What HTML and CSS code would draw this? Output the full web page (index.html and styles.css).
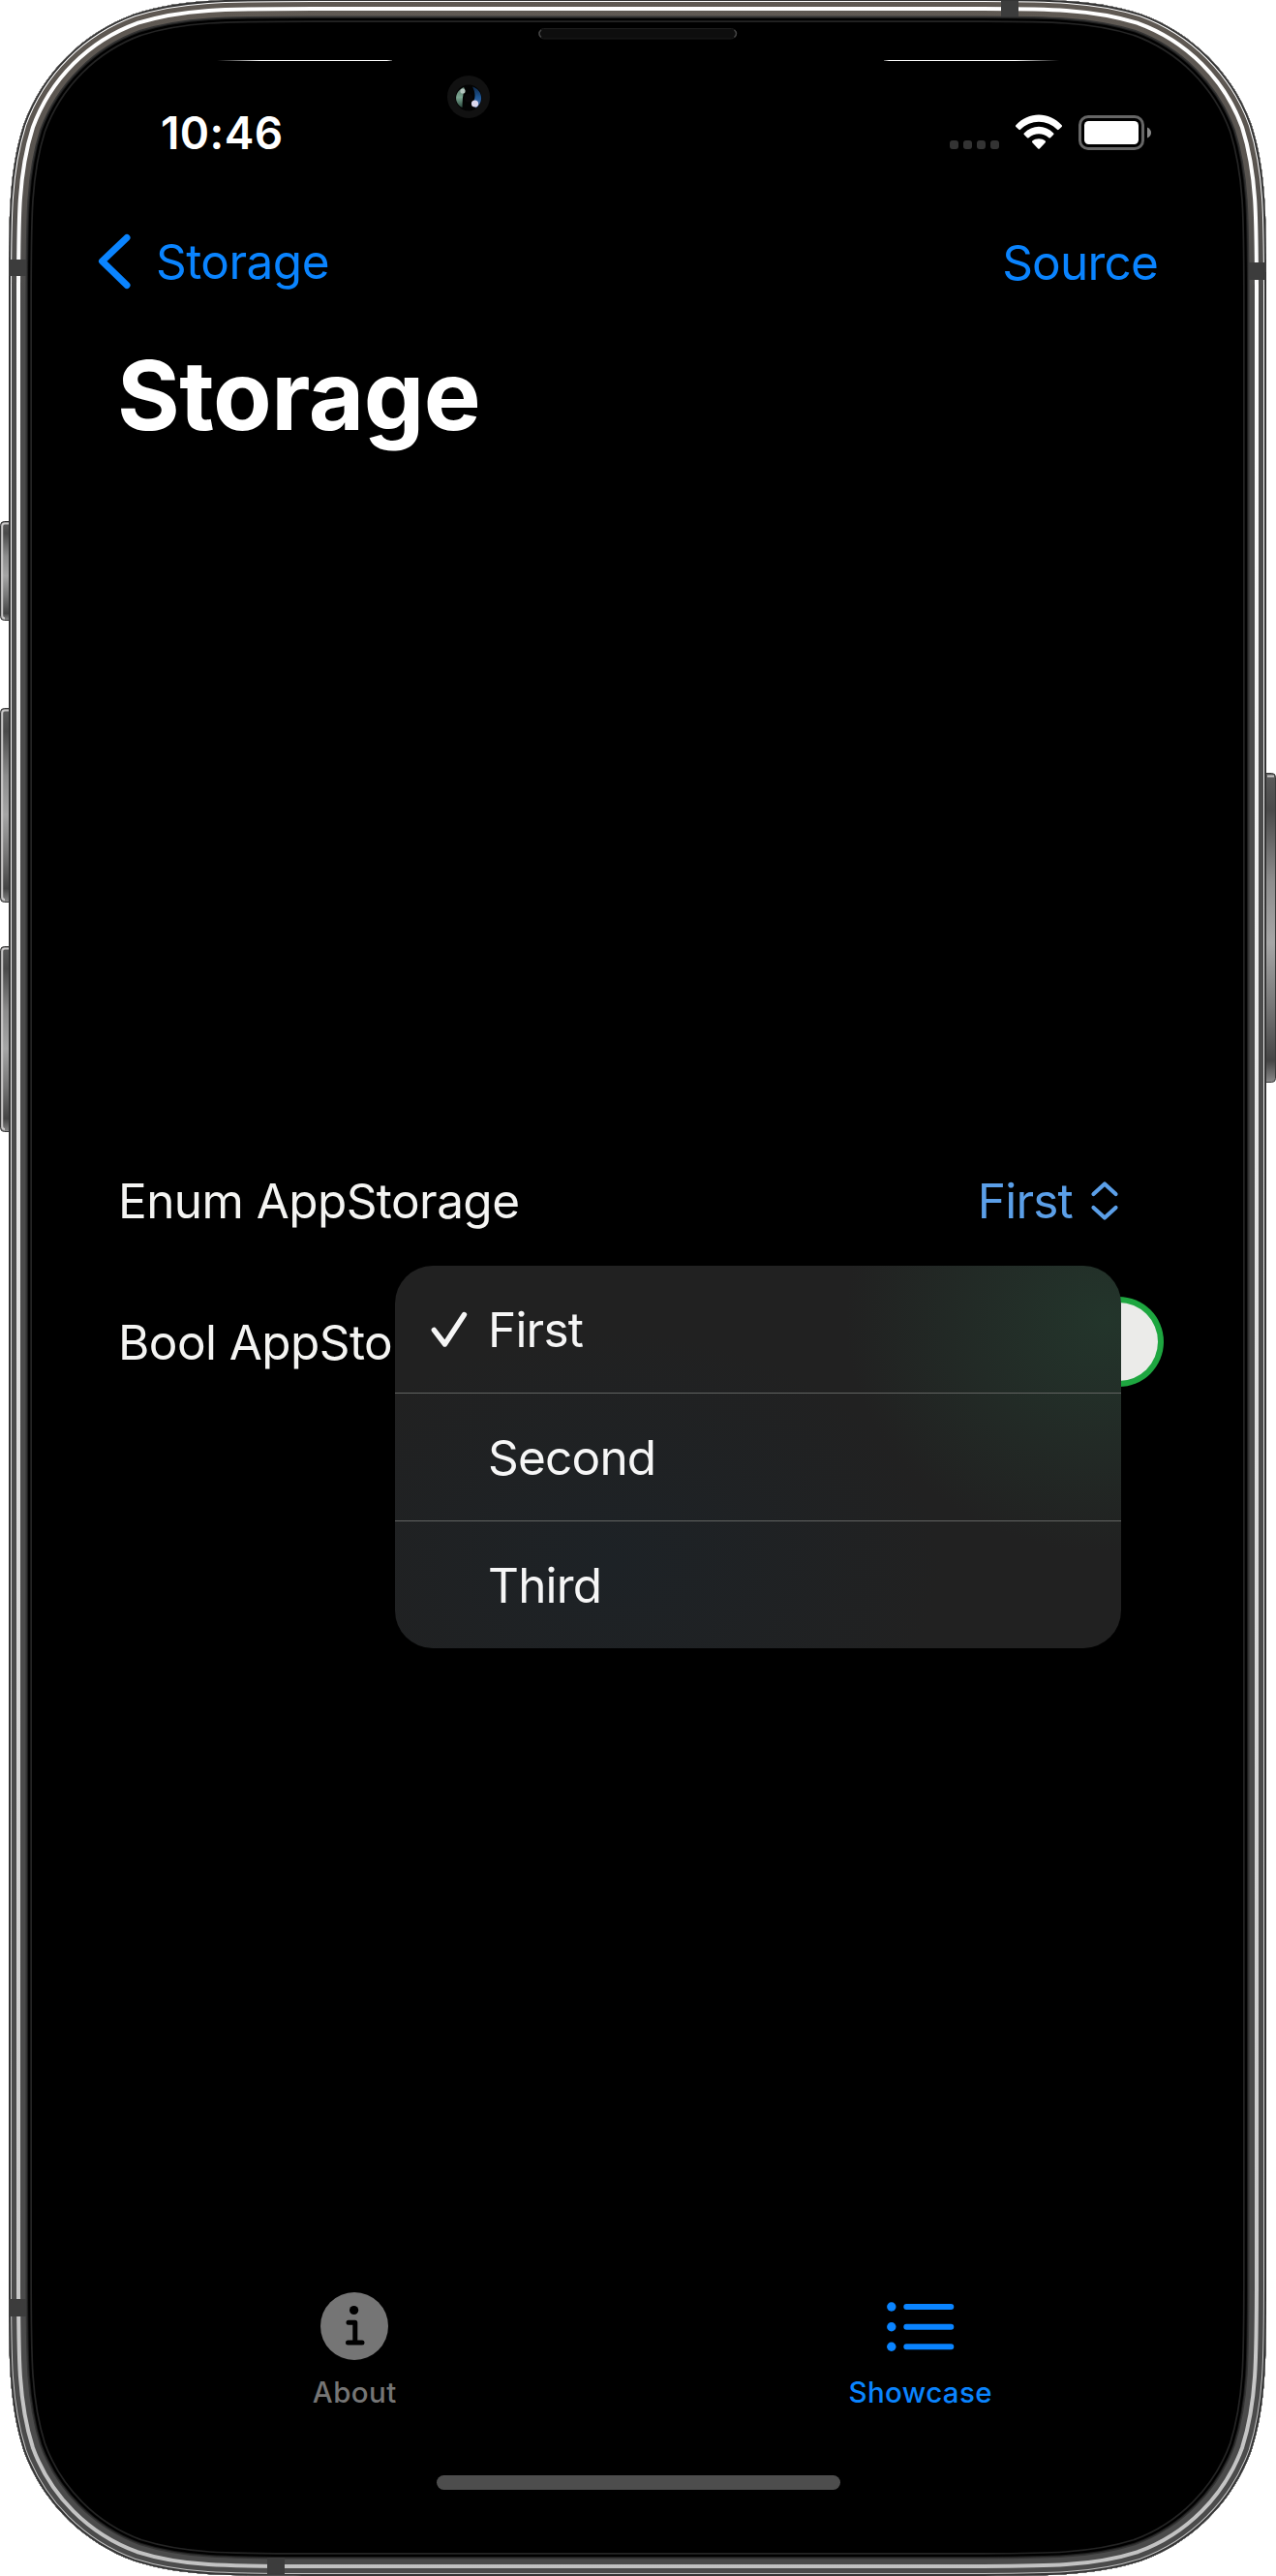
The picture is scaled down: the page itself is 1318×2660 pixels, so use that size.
FILE: index.html
```html
<!DOCTYPE html>
<html lang="en">
<head>
<meta charset="utf-8">
<title>Storage</title>
<link rel="stylesheet" href="styles.css">
</head>
<body>
<div class="phone">
  <svg class="hardware" width="1318" height="2660" viewBox="0 0 1318 2660" aria-hidden="true">
    <defs>
      <path id="body" d="M322.4 -1H994.6C1084.9 -1 1130 -1 1178.5 14.4C1231.6 33.7 1273.3 75.4 1292.6 128.5C1308 177 1308 222.1 1308 312.4V2346.6C1308 2436.9 1308 2482 1292.6 2530.5C1273.3 2583.6 1231.6 2625.3 1178.5 2644.6C1130 2660 1084.9 2660 994.6 2660H322.4C232.1 2660 187 2660 138.5 2644.6C85.4 2625.3 43.7 2583.6 24.4 2530.5C9 2482 9 2436.9 9 2346.6V312.4C9 222.1 9 177 24.4 128.5C43.7 75.4 85.4 33.7 138.5 14.4C187 -1 232.1 -1 322.4 -1Z"/>
      <clipPath id="bodyClip"><use href="#body"/></clipPath>
      <linearGradient id="steel" gradientUnits="userSpaceOnUse" x1="0" y1="0" x2="0" y2="2660">
        <stop offset="0" stop-color="#5f5953"/><stop offset=".06" stop-color="#5a5550"/><stop offset=".12" stop-color="#4b4b4b"/><stop offset="1" stop-color="#4b4b4b"/>
      </linearGradient>
      <linearGradient id="shine" gradientUnits="userSpaceOnUse" x1="0" y1="0" x2="0" y2="2660">
        <stop offset="0" stop-color="#fff"/><stop offset=".15" stop-color="#fafafa"/><stop offset=".45" stop-color="#e4e4e4"/><stop offset="1" stop-color="#c2c2c2"/>
      </linearGradient>
      <linearGradient id="button" x1="0" y1="0" x2="0" y2="1">
        <stop offset="0" stop-color="#5a5a5a"/><stop offset=".12" stop-color="#4a4a4a"/><stop offset=".35" stop-color="#8d8d8d"/><stop offset=".55" stop-color="#a6a6a6"/><stop offset=".75" stop-color="#777"/><stop offset=".93" stop-color="#444"/><stop offset="1" stop-color="#888"/>
      </linearGradient>
      <linearGradient id="fadeL"><stop offset="0" stop-color="#fff" stop-opacity="0"/><stop offset=".25" stop-color="#fff"/><stop offset=".97" stop-color="#fff"/><stop offset="1" stop-color="#fff" stop-opacity=".3"/></linearGradient>
      <linearGradient id="fadeR"><stop offset="0" stop-color="#fff" stop-opacity=".3"/><stop offset=".03" stop-color="#fff"/><stop offset=".75" stop-color="#fff"/><stop offset="1" stop-color="#fff" stop-opacity="0"/></linearGradient>
      <linearGradient id="lensL" x1="0" y1="0" x2="0" y2="1"><stop offset="0" stop-color="#5d7a6d"/><stop offset=".5" stop-color="#7ba591"/><stop offset="1" stop-color="#2c4a3e"/></linearGradient>
      <linearGradient id="lensR" x1="0" y1="0" x2="0" y2="1"><stop offset="0" stop-color="#0e2848"/><stop offset=".5" stop-color="#1e5796"/><stop offset="1" stop-color="#5570a8"/></linearGradient>
    </defs>

    <g fill="url(#button)" stroke="#3a3a3a" stroke-width="1">
      <rect x=".5" y="538.5" width="14" height="102" rx="4"/>
      <rect x=".5" y="731.5" width="14" height="200" rx="4"/>
      <rect x=".5" y="977.5" width="14" height="191" rx="4"/>
      <rect x="1303.500" y="798.5" width="14" height="319" rx="4"/>
    </g>
    <g fill="none" stroke="#c9c7c7" stroke-width="2">
      <path d="M9 540.500H5Q2.200 540.500 2.200 543.500V635.500Q2.200 638.500 5 638.500"/>
      <path d="M9 733.500H5Q2.200 733.500 2.200 736.500V926Q2.200 929 5 929"/>
      <path d="M9 979.500H5Q2.200 979.500 2.200 982.500V1163Q2.200 1166 5 1166"/>
      <path d="M1309 801.500H1316"/>
    </g>

    <use href="#body"/>
    <g clip-path="url(#bodyClip)" fill="none">
      <use href="#body" stroke="#242424" stroke-width="48"/>
      <use href="#body" stroke="#000" stroke-width="44.600"/>
      <use href="#body" stroke="#1c1c1c" stroke-width="40"/>
      <use href="#body" stroke="#333" stroke-width="38"/>
      <use href="#body" stroke="url(#steel)" stroke-width="35"/>
      <use href="#body" stroke="url(#shine)" stroke-width="24"/>
      <use href="#body" stroke="url(#steel)" stroke-width="16"/>
      <use href="#body" stroke="url(#shine)" stroke-width="6"/>
      <use href="#body" stroke="#343434" stroke-width="4"/>
    </g>
    <g fill="#3c3c3c">
      <rect x="9" y="268" width="18" height="17"/>
      <rect x="9" y="2374" width="18" height="18"/>
      <rect x="1290" y="271" width="17" height="18"/>
      <rect x="1034" y="1" width="18" height="16"/>
      <rect x="276" y="2641" width="18" height="18"/>
    </g>

    <rect x="224" y="62" width="181" height="1" fill="url(#fadeL)"/>
    <rect x="913" y="62" width="181" height="1" fill="url(#fadeR)"/>
    <rect x="556.500" y="29.500" width="204" height="10.500" rx="5.200" fill="#0e0e0e" stroke="#1c1c1c"/>
    <path d="M559 31Q555 34.700 559 38.500M758.500 31Q762.500 34.700 758.500 38.500" fill="none" stroke="#444" stroke-width="1.500"/>
    <circle cx="484" cy="100" r="22" fill="#111"/>
    <circle cx="484" cy="101" r="13.500" fill="#030303"/>
    <path d="M479 90C468.500 95 469 107 477.500 111C477.800 105 477.500 98 480 92Z" fill="url(#lensL)"/>
    <path d="M488 89.500C499 93 500 106 491.500 111.500L487.500 107C492 102 491 95 488 89.500Z" fill="url(#lensR)"/>
    <circle cx="484" cy="101" r="4.500" fill="#080608"/>
    <circle cx="478" cy="94" r="2.600" fill="#b4c6bf"/>
    <circle cx="490.500" cy="107" r="3.600" fill="#dcd8ee"/>
  </svg>

  <header class="status">
    <span class="time">10:46</span>
    <svg class="indicators" width="210" height="40" viewBox="980 117 210 40" aria-label="Wi-Fi and battery">
      <g fill="#333">
        <rect x="981" y="145" width="9" height="9" rx="3"/><rect x="995" y="145" width="9" height="9" rx="3"/><rect x="1009" y="145" width="9" height="9" rx="3"/><rect x="1023" y="145" width="9" height="9" rx="3"/>
      </g>
      <g fill="#fff">
        <path d="M1049.300 129.300C1062.500 114.800 1083.500 114.800 1096.700 129.300Q1097.500 130.200 1096.600 131L1093.600 133.800Q1092.800 134.500 1092 133.700C1081.500 123 1064.500 123 1054 133.700Q1053.200 134.500 1052.400 133.800L1049.400 131Q1048.500 130.200 1049.300 129.300Z"/>
        <path d="M1057.800 137.400C1066.500 128.600 1079.500 128.600 1088.200 137.400Q1089 138.200 1088.200 139L1085 142.200Q1084.200 142.900 1083.400 142.200C1077.500 137 1068.500 137 1062.600 142.200Q1061.800 142.900 1061 142.200L1057.800 139Q1057 138.200 1057.800 137.400Z"/>
        <path d="M1066.300 145.600C1070 142.600 1076 142.600 1079.700 145.600Q1080.500 146.400 1079.700 147.200L1073.800 153.400Q1073 154.200 1072.200 153.400L1066.300 147.200Q1065.500 146.400 1066.300 145.600Z"/>
        <rect x="1120" y="125" width="56" height="24" rx="4.500"/>
      </g>
      <rect x="1115.500" y="120.500" width="65" height="33" rx="8.500" fill="none" stroke="#666" stroke-width="3"/>
      <path d="M1185 131.500Q1189 133.500 1189 137T1185 142.500Z" fill="#888"/>
    </svg>
  </header>

  <nav class="nav">
    <a class="back">
      <svg width="36" height="60" viewBox="0 0 36 60"><path d="M31 5.500 5.500 29.700 31 54.500" fill="none" stroke="currentColor" stroke-width="7" stroke-linecap="round" stroke-linejoin="round"/></svg>
      <span class="back-label">Storage</span>
    </a>
    <a class="source">Source</a>
  </nav>

  <h1 class="title">Storage</h1>

  <main class="form">
    <div class="row">
      <span class="label">Enum AppStorage</span>
      <span class="picker">
        <span class="value">First</span>
        <svg width="30" height="42" viewBox="0 0 30 42"><path d="M3.500 14 15 3.500 26.500 14M3.500 28 15 38.500 26.500 28" fill="none" stroke="currentColor" stroke-width="4.200" stroke-linecap="round" stroke-linejoin="round"/></svg>
      </span>
      <div class="menu">
        <div class="item">
          <svg class="check" width="40" height="40" viewBox="0 0 40 40"><path d="M5.300 20.300 16.500 35 36.500 4.500" fill="none" stroke="currentColor" stroke-width="5.400" stroke-linecap="round" stroke-linejoin="round"/></svg>
          <span>First</span>
        </div>
        <div class="item">Second</div>
        <div class="item">Third</div>
      </div>
    </div>
    <div class="row">
      <span class="label">Bool AppSto</span>
      <span class="toggle"><span class="knob"></span></span>
    </div>
  </main>

  <footer class="tabs">
    <a class="tab">
      <svg width="70" height="70" viewBox="0 0 70 70"><circle cx="35" cy="35" r="35" fill="currentColor"/><circle cx="34.600" cy="18.500" r="4.600"/><path d="M29 31.300H35.800V52M28.500 52H43" fill="none" stroke="#000" stroke-width="5" stroke-linecap="round" stroke-linejoin="round"/></svg>
      <span class="tab-label">About</span>
    </a>
    <a class="tab active">
      <svg width="70" height="70" viewBox="0 0 70 70"><g fill="currentColor"><circle cx="4.800" cy="15" r="4.700"/><circle cx="4.800" cy="35.700" r="4.700"/><circle cx="4.800" cy="56.300" r="4.700"/></g><path d="M20.300 15H66.300M20.300 35.700H66.300M20.300 56.300H66.300" stroke="currentColor" stroke-width="6" stroke-linecap="round"/></svg>
      <span class="tab-label">Showcase</span>
    </a>
  </footer>
  <div class="home"></div>
</div>
</body>
</html>
```
FILE: styles.css
```css
body {
  margin: 0;
  background: #fff;
  font-family: Inter, "Liberation Sans", sans-serif;
}

.phone {
  position: relative;
  width: 1318px;
  height: 2660px;
  overflow: hidden;
  display: flex;
  flex-direction: column;
  color: #fff;
  font-size: 49.5px;
  line-height: 60px;
}

.phone svg { display: block; flex: none; }

/* Device body, drawn behind the screen content */
.hardware {
  position: absolute;
  inset: 0;
}

.status,
.nav,
.title,
.form,
.tabs,
.home { position: relative; }

.status {
  display: flex;
  align-items: center;
  justify-content: space-between;
  height: 90px;
  margin-top: 92px;
  padding: 0 128px 0 166px;
}

.time {
  font-size: 46px;
  font-weight: 600;
  letter-spacing: 0.4px;
}

.nav {
  display: flex;
  align-items: center;
  justify-content: space-between;
  height: 90px;
  margin-top: 43px;
  padding: 0 122px 0 100px;
  color: #0a84ff;
}

.back {
  display: flex;
  align-items: center;
  gap: 25px;
}

.back-label { letter-spacing: -0.55px; }

.source {
  padding-top: 2px;
  letter-spacing: -0.8px;
}

.title {
  margin: 33px 0 0 121px;
  font-size: 99px;
  line-height: 120px;
  font-weight: 700;
  letter-spacing: -0.5px;
}

.form {
  flex: 1;
  padding: 699px 116px 0 122px;
}

.row {
  position: relative;
  display: flex;
  align-items: center;
  justify-content: space-between;
  height: 146px;
}

.label {
  color: #f4f4f2;
  letter-spacing: -0.58px;
}

.picker {
  display: flex;
  align-items: center;
  gap: 18px;
  margin-right: 46px;
  color: #5b9fe8;
  letter-spacing: -0.8px;
}

.toggle {
  display: flex;
  justify-content: flex-end;
  box-sizing: border-box;
  width: 153px;
  height: 93px;
  margin-bottom: 1px;
  padding: 6px;
  border-radius: 47px;
  background: #1ea640;
}

.knob {
  width: 81px;
  height: 81px;
  border-radius: 50%;
  background: #ebebe9;
}

/* Popup hangs below the picker and covers the next row */
.menu {
  position: absolute;
  top: 140px;
  right: 44px;
  z-index: 1;
  width: 750px;
  border-radius: 39px;
  overflow: hidden;
  color: #f6f6f6;
  letter-spacing: -0.8px;
  background:
    radial-gradient(ellipse 270px 240px at 98% 14%, #23352b 0%, rgba(35, 50, 42, .7) 40%, rgba(34, 36, 34, 0) 100%),
    radial-gradient(ellipse 340px 240px at 30% 78%, #1d2226 0%, rgba(31, 33, 36, 0) 100%),
    #212121;
}

.item {
  display: flex;
  align-items: center;
  gap: 21px;
  height: 131px;
  padding-left: 96px;
}

.item:first-child { padding-left: 35px; }

.item + .item { border-top: 1px solid #616361; }

.tabs {
  display: flex;
  height: 189px;
  padding: 0 75px 0 74px;
  color: #757575;
}

.tab {
  flex: 1;
  display: flex;
  flex-direction: column;
  align-items: center;
}

.active { color: #0a84ff; }

.tab-label {
  margin-top: 17px;
  font-size: 29.5px;
  line-height: 32px;
  font-weight: 500;
  letter-spacing: 0.4px;
}

.home {
  width: 417px;
  height: 15px;
  margin: 0 0 89px 451px;
  border-radius: 8px;
  background: #4d4d4d;
}
```
